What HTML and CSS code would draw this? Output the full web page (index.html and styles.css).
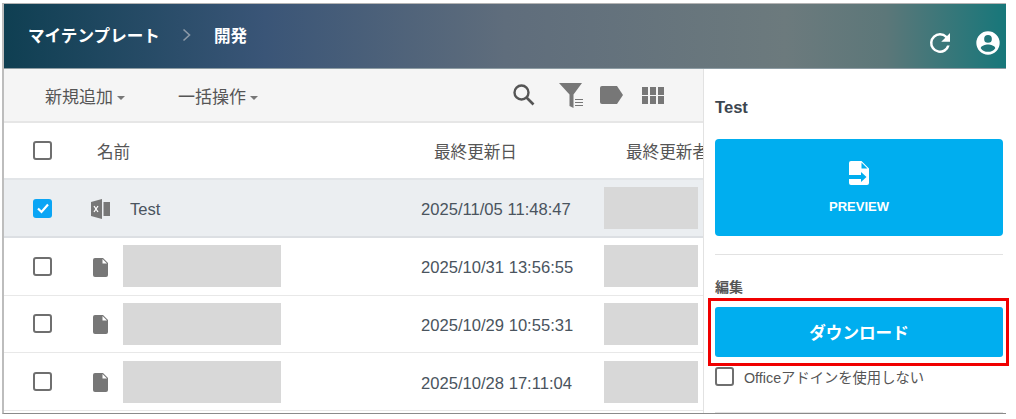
FILE: index.html
```html
<!DOCTYPE html>
<html lang="ja">
<head>
  <meta charset="UTF-8">
  <title>マイテンプレート</title>
  <link rel="stylesheet" href="styles.css">
</head>
<body>
  <div class="frame">
    <header class="topbar">
      <div class="crumbs">
        <span class="crumb">マイテンプレート</span>
        <svg class="crumb-sep" width="10" height="14" viewBox="0 0 10 14"><path d="M1.5 1.5 7.5 7l-6 5.5" fill="none" stroke="#8c9aa8" stroke-width="1.6"/></svg>
        <span class="crumb">開発</span>
      </div>
      <div class="top-icons">
        <svg width="30" height="30" viewBox="0 0 24 24"><path fill="#fff" d="M17.65 6.35A7.96 7.96 0 0 0 12 4a8 8 0 1 0 7.73 10h-2.08A6 6 0 1 1 12 6c1.66 0 3.14.69 4.22 1.78L13 11h7V4l-2.35 2.35z"/></svg>
        <svg width="28" height="28" viewBox="0 0 24 24"><path fill="#fff" d="M12 2a10 10 0 1 0 0 20 10 10 0 0 0 0-20zm0 3.2a3.3 3.3 0 1 1 0 6.6 3.3 3.3 0 0 1 0-6.6zm0 14.4a7.6 7.6 0 0 1-6.2-3.2c.03-2 4.1-3.1 6.2-3.1s6.17 1.1 6.2 3.1a7.6 7.6 0 0 1-6.2 3.2z"/></svg>
      </div>
    </header>

    <div class="body">
      <section class="list">
        <div class="toolbar">
          <div class="menus">
            <span class="menu">新規追加<i class="caret"></i></span>
            <span class="menu">一括操作<i class="caret"></i></span>
          </div>
          <div class="tools">
            <svg class="tool-search" width="26" height="26" viewBox="0 0 26 26"><circle cx="10.5" cy="10.5" r="7" fill="none" stroke="#555" stroke-width="2.4"/><path d="m15.5 15.5 7 7" stroke="#555" stroke-width="2.6"/></svg>
            <svg class="tool-filter" width="26" height="26" viewBox="0 0 26 26"><path fill="#777" d="M0 1h23l-8.5 11.5V26l-4-2V12.5z"/><path stroke="#777" stroke-width="1.2" d="M16 17.5h8M16 20.5h8M16 23.5h8"/></svg>
            <svg class="tool-tag" width="24" height="18" viewBox="0 0 24 18"><path fill="#777" d="M2 0h15l6 9-6 9H2a2 2 0 0 1-2-2V2a2 2 0 0 1 2-2z"/></svg>
            <svg class="tool-grid" width="22" height="17" viewBox="0 0 22 17"><path fill="#777" d="M0 0h6v8H0zM8 0h6v8H8zM16 0h6v8h-6zM0 9h6v8H0zM8 9h6v8H8zM16 9h6v8h-6z"/></svg>
          </div>
        </div>

        <div class="row row-head">
          <div class="cell-check"><span class="check"></span></div>
          <div class="cell-head-name">名前</div>
          <div class="cell-head-date">最終更新日</div>
          <div class="cell-head-user">最終更新者</div>
        </div>

        <div class="row row-selected">
          <div class="cell-check">
            <span class="check check-on">
              <svg width="18" height="18" viewBox="0 0 18 18"><path d="M4 9.5 7.5 13 14 5.5" fill="none" stroke="#fff" stroke-width="2.2"/></svg>
            </span>
          </div>
          <div class="cell-icon">
            <svg width="20" height="20" viewBox="0 0 20 20"><path fill="#777" d="M0 3 11 0v20L0 17z"/><path fill="#777" d="M12.500 3H19v14h-6.500z"/><path stroke="#fff" stroke-width="1.300" d="m3 7 4 6M7 7l-4 6"/></svg>
          </div>
          <div class="cell-name">Test</div>
          <div class="cell-date">2025/11/05 11:48:47</div>
          <div class="cell-user"><span class="mask mask-user"></span></div>
        </div>

        <div class="row">
          <div class="cell-check"><span class="check"></span></div>
          <div class="cell-icon"><svg class="doc" width="15" height="19" viewBox="0 0 15 19"><path fill="#777" d="M2 0h8l5 5v12a2 2 0 0 1-2 2H2a2 2 0 0 1-2-2V2a2 2 0 0 1 2-2z"/><path fill="#fff" d="M9.500 1v4.500H14z"/></svg></div>
          <div class="cell-mask"><span class="mask mask-name"></span></div>
          <div class="cell-date">2025/10/31 13:56:55</div>
          <div class="cell-user"><span class="mask mask-user"></span></div>
        </div>

        <div class="row">
          <div class="cell-check"><span class="check"></span></div>
          <div class="cell-icon"><svg class="doc" width="15" height="19" viewBox="0 0 15 19"><path fill="#777" d="M2 0h8l5 5v12a2 2 0 0 1-2 2H2a2 2 0 0 1-2-2V2a2 2 0 0 1 2-2z"/><path fill="#fff" d="M9.500 1v4.500H14z"/></svg></div>
          <div class="cell-mask"><span class="mask mask-name"></span></div>
          <div class="cell-date">2025/10/29 10:55:31</div>
          <div class="cell-user"><span class="mask mask-user"></span></div>
        </div>

        <div class="row">
          <div class="cell-check"><span class="check"></span></div>
          <div class="cell-icon"><svg class="doc" width="15" height="19" viewBox="0 0 15 19"><path fill="#777" d="M2 0h8l5 5v12a2 2 0 0 1-2 2H2a2 2 0 0 1-2-2V2a2 2 0 0 1 2-2z"/><path fill="#fff" d="M9.500 1v4.500H14z"/></svg></div>
          <div class="cell-mask"><span class="mask mask-name"></span></div>
          <div class="cell-date">2025/10/28 17:11:04</div>
          <div class="cell-user"><span class="mask mask-user"></span></div>
        </div>
      </section>

      <aside class="panel">
        <div class="panel-title">Test</div>
        <div class="btn-preview">
          <svg width="20" height="24" viewBox="0 0 20 24"><path fill="#fff" d="M2 0h10.500L20 7.500V22a2 2 0 0 1-2 2H2a2 2 0 0 1-2-2v-4h12v3l5.500-5L12 11v3H0V2a2 2 0 0 1 2-2z"/><path fill="#00aeef" d="M12.500 1.500V7.500H18.500z"/></svg>
          <span>PREVIEW</span>
        </div>
        <div class="panel-line"></div>
        <div class="panel-label">編集</div>
        <div class="btn-download">ダウンロード</div>
        <label class="addin"><span class="check"></span>Officeアドインを使用しない</label>
        <div class="panel-line panel-line-end"></div>
      </aside>
    </div>
  </div>
  <div class="highlight"></div>
</body>
</html>
```

FILE: styles.css
```css
html, body {
  height: 100%;
}

body {
  margin: 0;
  background-color: #fff;
  font-family: "Liberation Sans", "Noto Sans CJK JP", sans-serif;
  color: #3c4650;
  overflow: hidden;
}

.frame {
  width: 1002px;
  height: 409px;
  margin: 3px 0 0 2px;
  border-top: 1px solid #b4b4b4;
  border-left: 2px solid #bdbdbd;
  border-bottom: 1px solid #8a8a8a;
  display: flex;
  flex-direction: column;
  overflow: hidden;
}

.topbar {
  flex: none;
  height: 64px;
  display: flex;
  justify-content: space-between;
  background: linear-gradient(90deg, #0f3f52 0%, #3a5577 26%, #5f6d7c 50%, #6c7a7d 78%, #5c7779 88%, #17777a 100%);
  border-bottom: 1px solid #8d9ca3;
}

.crumbs {
  display: flex;
  align-items: center;
  gap: 22px;
  padding: 0 0 2px 24px;
  height: 62px;
}

.crumb {
  font-size: 16.6px;
  font-weight: bold;
  color: #fff;
}

.top-icons {
  display: flex;
  align-items: center;
  gap: 19px;
  padding: 13px 4px 0 0;
}

.body {
  flex: 1;
  display: flex;
  min-height: 0;
}

.list {
  width: 699px;
  flex: none;
  overflow: hidden;
}

.toolbar {
  height: 52px;
  display: flex;
  justify-content: space-between;
  align-items: center;
  background-color: #f5f5f5;
  border-bottom: 2px solid #e6e6e6;
}

.menus {
  display: flex;
  gap: 53px;
  padding-left: 41px;
  font-size: 17px;
  color: #555;
}

.caret {
  display: inline-block;
  margin-left: 4px;
  vertical-align: 3px;
  border-left: 4px solid transparent;
  border-right: 4px solid transparent;
  border-top: 4px solid #777;
}

.tools {
  display: flex;
  align-items: center;
  padding-right: 39px;
}

.tool-search {
  margin-right: 22px;
}

.tool-filter {
  margin-right: 15px;
}

.tool-tag {
  margin-right: 18px;
}

.row {
  height: 56.67px;
  display: grid;
  grid-template-columns: 87px 32px 298px 183px 98px;
  align-items: center;
  border-bottom: 1px solid #e8e8e8;
  font-size: 16.6px;
}

.row-head {
  grid-template-columns: 87px 343px 192px 77px;
  border-bottom: 2px solid #e2e5e8;
  height: 55px;
}

.row-selected {
  background-color: #ebeef1;
  border-bottom: 2px solid #dcdfe3;
  height: 56px;
}

.cell-check {
  padding-left: 29px;
  display: flex;
}

.check {
  display: inline-block;
  box-sizing: border-box;
  width: 19px;
  height: 19px;
  border: 2px solid #6f6f6f;
  border-radius: 3px;
  background-color: #fff;
}

.check-on {
  border: none;
  background-color: #0aa5f5;
}

.check-on svg {
  display: block;
  margin: 0.5px;
}

.cell-head-name {
  padding-left: 6px;
  color: #555;
}

.cell-head-date {
  color: #555;
}

.cell-head-user {
  color: #555;
  white-space: nowrap;
}

.cell-icon {
  display: flex;
  padding-top: 2px;
}

.cell-icon .doc {
  margin-left: 2px;
}

.cell-name {
  padding: 4px 0 0 7px;
  color: #4a545e;
}

.cell-date {
  padding-top: 4px;
  color: #4a545e;
  white-space: nowrap;
}

.cell-mask,
.cell-user {
  display: flex;
}

.mask {
  display: block;
  height: 42px;
  background-color: #d8d8d8;
}

.mask-name {
  width: 158px;
}

.mask-user {
  width: 94px;
}

.panel {
  flex: 1;
  box-sizing: border-box;
  padding: 29px 3px 0 11px;
  border-left: 1px solid #e2e2e2;
  background-color: #fff;
}

.panel-title {
  font-size: 16.6px;
  font-weight: bold;
  color: #3c4650;
  margin-bottom: 21px;
}

.btn-preview {
  height: 97px;
  display: flex;
  flex-direction: column;
  align-items: center;
  justify-content: center;
  gap: 14px;
  background-color: #00aeef;
  border-radius: 4px;
  color: #fff;
  font-size: 13px;
  font-weight: bold;
  margin-bottom: 18px;
}

.panel-line {
  height: 1px;
  background-color: #e2e2e2;
}

.panel-label {
  font-size: 14px;
  font-weight: bold;
  color: #555;
  margin: 21px 0 11px;
}

.btn-download {
  height: 50px;
  display: flex;
  align-items: center;
  justify-content: center;
  background-color: #00aeef;
  border-radius: 3px;
  color: #fff;
  font-size: 16.6px;
  font-weight: bold;
  margin-bottom: 9px;
}

.addin {
  display: flex;
  align-items: center;
  gap: 10px;
  font-size: 14.3px;
  color: #555;
}

.panel-line-end {
  margin-top: 25px;
}

.highlight {
  position: absolute;
  left: 708px;
  top: 298px;
  width: 301px;
  height: 68px;
  box-sizing: border-box;
  border: 3px solid #f00000;
}
```
